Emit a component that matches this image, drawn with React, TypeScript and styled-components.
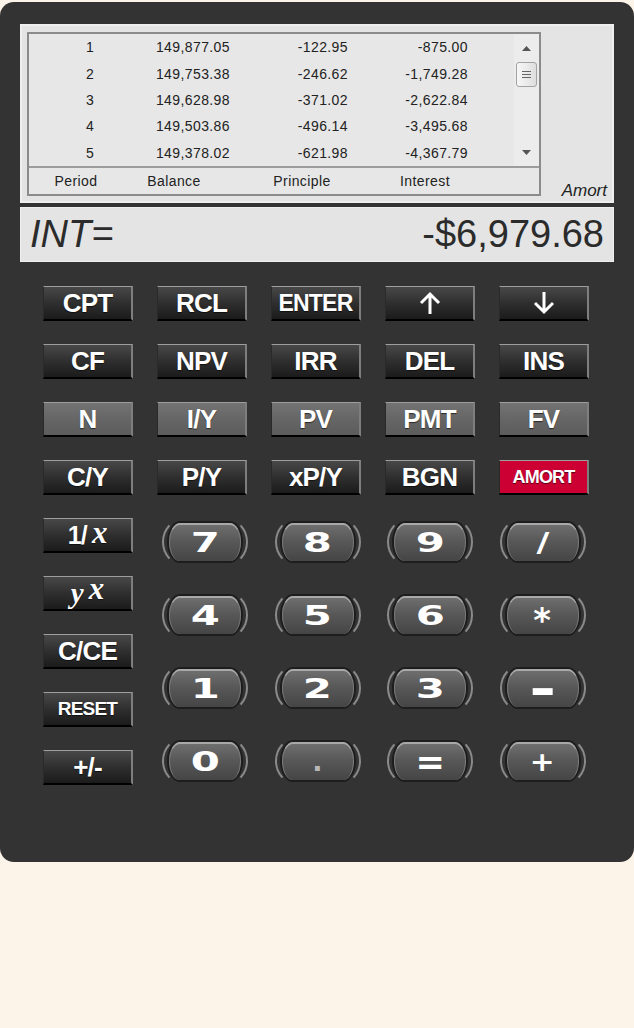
import React from "react";
import styled, { createGlobalStyle } from "styled-components";

const GlobalStyle = createGlobalStyle`
  body {
    margin: 0;
    background: #fcf4e9;
    font-family: "Liberation Sans", Arial, sans-serif;
  }
`;

const rows = [
  ["1", "149,877.05", "-122.95", "-875.00"],
  ["2", "149,753.38", "-246.62", "-1,749.28"],
  ["3", "149,628.98", "-371.02", "-2,622.84"],
  ["4", "149,503.86", "-496.14", "-3,495.68"],
  ["5", "149,378.02", "-621.98", "-4,367.79"],
];

type Tone = "dark" | "grey" | "red";

const funcKeys: { label: React.ReactNode; tone?: Tone; size?: number }[] = [
  { label: "CPT" },
  { label: "RCL" },
  { label: "ENTER", size: 23 },
  { label: <Arrow up /> },
  { label: <Arrow /> },
  { label: "CF" },
  { label: "NPV" },
  { label: "IRR" },
  { label: "DEL" },
  { label: "INS" },
  { label: "N", tone: "grey" },
  { label: "I/Y", tone: "grey" },
  { label: "PV", tone: "grey" },
  { label: "PMT", tone: "grey" },
  { label: "FV", tone: "grey" },
  { label: "C/Y" },
  { label: "P/Y" },
  { label: "xP/Y" },
  { label: "BGN" },
  { label: "AMORT", tone: "red", size: 18 },
];

const numKeys: { label: string; sx?: number; sy?: number; dy?: number; dim?: boolean }[] = [
  { label: "7" },
  { label: "8" },
  { label: "9" },
  { label: "/", sx: 1.3 },
  { label: "4" },
  { label: "5" },
  { label: "6" },
  { label: "*", sx: 1.25, sy: 1.25, dy: 5 },
  { label: "1" },
  { label: "2" },
  { label: "3" },
  { label: "-", sx: 2.4, sy: 1.8 },
  { label: "0" },
  { label: ".", sx: 1, dim: true },
  { label: "=", sx: 1.3, sy: 1.3 },
  { label: "+", sx: 1.1 },
];

function Arrow({ up }: { up?: boolean }) {
  return (
    <svg width="22" height="24" viewBox="0 0 22 24" style={{ transform: up ? "none" : "rotate(180deg)" }}>
      <path d="M11 23 V3 M2 12 L11 3 L20 12" fill="none" stroke="#fff" strokeWidth="3" />
    </svg>
  );
}

function Triangle({ down }: { down?: boolean }) {
  return (
    <svg width="9" height="5" viewBox="0 0 9 5">
      <path d={down ? "M0 0 H9 L4.5 5 Z" : "M0 5 H9 L4.5 0 Z"} fill="#555" />
    </svg>
  );
}

const App = () => {
  return (
    <>
      <GlobalStyle />
      <Calculator>
        <AmortBox>
          <TableFrame>
            <TableBody>
              <DataRows>
                {rows.map((r) => (
                  <DataRow key={r[0]}>
                    <Cell $center>{r[0]}</Cell>
                    <Cell>{r[1]}</Cell>
                    <Cell>{r[2]}</Cell>
                    <Cell>{r[3]}</Cell>
                  </DataRow>
                ))}
              </DataRows>
              <Scrollbar>
                <ArrowBox>
                  <Triangle />
                </ArrowBox>
                <Thumb>
                  <svg width="9" height="9" viewBox="0 0 9 9">
                    <path d="M0 1.5 H9 M0 4.5 H9 M0 7.5 H9" stroke="#666" strokeWidth="1" />
                  </svg>
                </Thumb>
                <Spacer />
                <ArrowBox>
                  <Triangle down />
                </ArrowBox>
              </Scrollbar>
            </TableBody>
            <HeaderRow>
              <span>Period</span>
              <span>Balance</span>
              <span>Principle</span>
              <span>Interest</span>
            </HeaderRow>
          </TableFrame>
          <AmortLabel>Amort</AmortLabel>
        </AmortBox>

        <Display>
          <DisplayName>INT=</DisplayName>
          <DisplayValue>-$6,979.68</DisplayValue>
        </Display>

        <Keypad>
          <FuncGrid>
            {funcKeys.map((k, i) => (
              <Key key={i} $tone={k.tone ?? "dark"} $size={k.size ?? 26}>
                {k.label}
              </Key>
            ))}
          </FuncGrid>
          <Lower>
            <SideCol>
              <Key $tone="dark" $size={25}>
                1/<SerifX>x</SerifX>
              </Key>
              <Key $tone="dark" $size={26}>
                <SerifY>y</SerifY>
                <SerifX $raised>x</SerifX>
              </Key>
              <Key $tone="dark" $size={26}>
                C/CE
              </Key>
              <Key $tone="dark" $size={19}>
                RESET
              </Key>
              <Key $tone="dark" $size={26}>
                +/-
              </Key>
            </SideCol>
            <NumGrid>
              {numKeys.map((k) => (
                <NumKey key={k.label}>
                  <KeyFace>
                    <Digit
                      $dim={k.dim}
                      style={{
                        transform: `translateY(${k.dy ?? 0}px) scale(${k.sx ?? 1.55}, ${k.sy ?? 1})`,
                      }}
                    >
                      {k.label}
                    </Digit>
                  </KeyFace>
                </NumKey>
              ))}
            </NumGrid>
          </Lower>
        </Keypad>
      </Calculator>
    </>
  );
};

export default App;

const Calculator = styled.div`
  margin-top: 2px;
  width: 634px;
  height: 860px;
  box-sizing: border-box;
  background: #333333;
  border-radius: 14px;
  padding: 22px 20px 0;
`;

const AmortBox = styled.div`
  height: 179px;
  box-sizing: border-box;
  background: #e4e4e4;
  border: 2px solid #efefef;
  padding: 6px 5px 5px 5px;
  display: flex;
  justify-content: space-between;
`;

const TableFrame = styled.div`
  width: 514px;
  height: 164px;
  box-sizing: border-box;
  border: 2px solid #8b8b8b;
  background: #e7e7e7;
  display: flex;
  flex-direction: column;
  color: #222;
  font-size: 14px;
  letter-spacing: 0.4px;
`;

const TableBody = styled.div`
  height: 132px;
  display: flex;
  border-bottom: 2px solid #9c9c9c;
`;

const DataRows = styled.div`
  flex: 1;
  display: flex;
  flex-direction: column;
`;

const DataRow = styled.div`
  height: 26.4px;
  display: grid;
  grid-template-columns: 122px 79px 118px 120px;
  align-items: center;
`;

const Cell = styled.span<{ $center?: boolean }>`
  text-align: ${(p) => (p.$center ? "center" : "right")};
`;

const Scrollbar = styled.div`
  width: 25px;
  background: #ececec;
  display: flex;
  flex-direction: column;
  align-items: center;
`;

const ArrowBox = styled.div`
  height: 28px;
  display: flex;
  align-items: center;
  justify-content: center;
`;

const Thumb = styled.div`
  width: 21px;
  height: 25px;
  box-sizing: border-box;
  border: 1px solid #a3a3a3;
  border-radius: 3px;
  background: linear-gradient(to right, #f7f7f7, #dedede);
  display: flex;
  align-items: center;
  justify-content: center;
`;

const Spacer = styled.div`
  flex: 1;
`;

const HeaderRow = styled.div`
  flex: 1;
  display: grid;
  grid-template-columns: 94px 102px 154px 92px;
  align-items: center;
  text-align: center;
`;

const AmortLabel = styled.div`
  align-self: flex-end;
  font-size: 17px;
  font-style: italic;
  line-height: 17px;
  margin: 0 0 -3px;
  color: #222;
`;

const Display = styled.div`
  margin-top: 4px;
  height: 55px;
  box-sizing: border-box;
  background: #e4e4e4;
  border: 1px solid #efefef;
  padding: 0 9px;
  display: flex;
  align-items: center;
  justify-content: space-between;
  color: #2b2b2b;
  font-size: 38px;
`;

const DisplayName = styled.span`
  font-style: italic;
`;

const DisplayValue = styled.span``;

const Keypad = styled.div`
  margin-top: 24px;
  padding-left: 23px;
  display: flex;
  flex-direction: column;
  gap: 23px;
`;

const FuncGrid = styled.div`
  display: grid;
  grid-template-columns: repeat(5, 90px);
  column-gap: 24px;
  row-gap: 23px;
`;

const toneBg: Record<Tone, string> = {
  dark: "linear-gradient(to bottom, #484848 0%, #2f2f2f 50%, #1b1b1b 100%)",
  grey: "linear-gradient(to bottom, #737373 0%, #666 50%, #5c5c5c 100%)",
  red: "#cc0033",
};

const Key = styled.button<{ $tone: Tone; $size: number }>`
  width: 90px;
  height: 35px;
  box-sizing: border-box;
  padding: 0;
  display: flex;
  align-items: center;
  justify-content: center;
  border-style: solid;
  border-width: 1px 2px 2px 1px;
  border-color: #9e9e9e #7e7e7e #000 #2a2a2a;
  background: ${(p) => toneBg[p.$tone]};
  color: #fff;
  font-family: "Liberation Sans", Arial, sans-serif;
  font-weight: bold;
  font-size: ${(p) => p.$size}px;
  letter-spacing: -0.8px;
  text-shadow: 0 1px 1px rgba(0, 0, 0, 0.6);
  cursor: pointer;
`;

const SerifX = styled.span<{ $raised?: boolean }>`
  font-family: "Liberation Serif", "Times New Roman", serif;
  font-style: italic;
  font-weight: bold;
  font-size: 31px;
  letter-spacing: 0;
  margin-left: ${(p) => (p.$raised ? 6 : 5)}px;
  position: relative;
  top: ${(p) => (p.$raised ? -4 : -2)}px;
`;

const SerifY = styled.span`
  font-family: "Liberation Serif", "Times New Roman", serif;
  font-style: italic;
  font-weight: bold;
  font-size: 29px;
`;

const Lower = styled.div`
  display: flex;
  gap: 29px;
`;

const SideCol = styled.div`
  display: flex;
  flex-direction: column;
  gap: 23px;
`;

const NumGrid = styled.div`
  display: grid;
  grid-template-columns: repeat(4, 86px);
  column-gap: 26.5px;
  row-gap: 25px;
`;

const NumKey = styled.button`
  width: 86px;
  height: 48px;
  box-sizing: border-box;
  padding: 0;
  background: transparent;
  border: 2px solid transparent;
  border-left-color: #8a8a8a;
  border-right-color: #8a8a8a;
  border-radius: 22px / 50%;
  display: flex;
  cursor: pointer;
`;

const KeyFace = styled.span`
  flex: 1;
  margin: 3px 5px 3px;
  border-radius: 11px / 50%;
  background: linear-gradient(to bottom, #6e6e6e 0%, #585858 45%, #454545 100%);
  border-top: 2px solid #a8a8a8;
  border-left: 1px solid #7c7c7c;
  border-right: 1px solid #7c7c7c;
  box-shadow: 0 0 0 2px #1d1d1d;
  display: flex;
  align-items: center;
  justify-content: center;
`;

const Digit = styled.span<{ $dim?: boolean }>`
  font-family: "DejaVu Sans", sans-serif;
  font-weight: bold;
  font-size: 27px;
  line-height: 24px;
  color: ${(p) => (p.$dim ? "#b8b8b8" : "#fff")};
  display: inline-block;
`;
